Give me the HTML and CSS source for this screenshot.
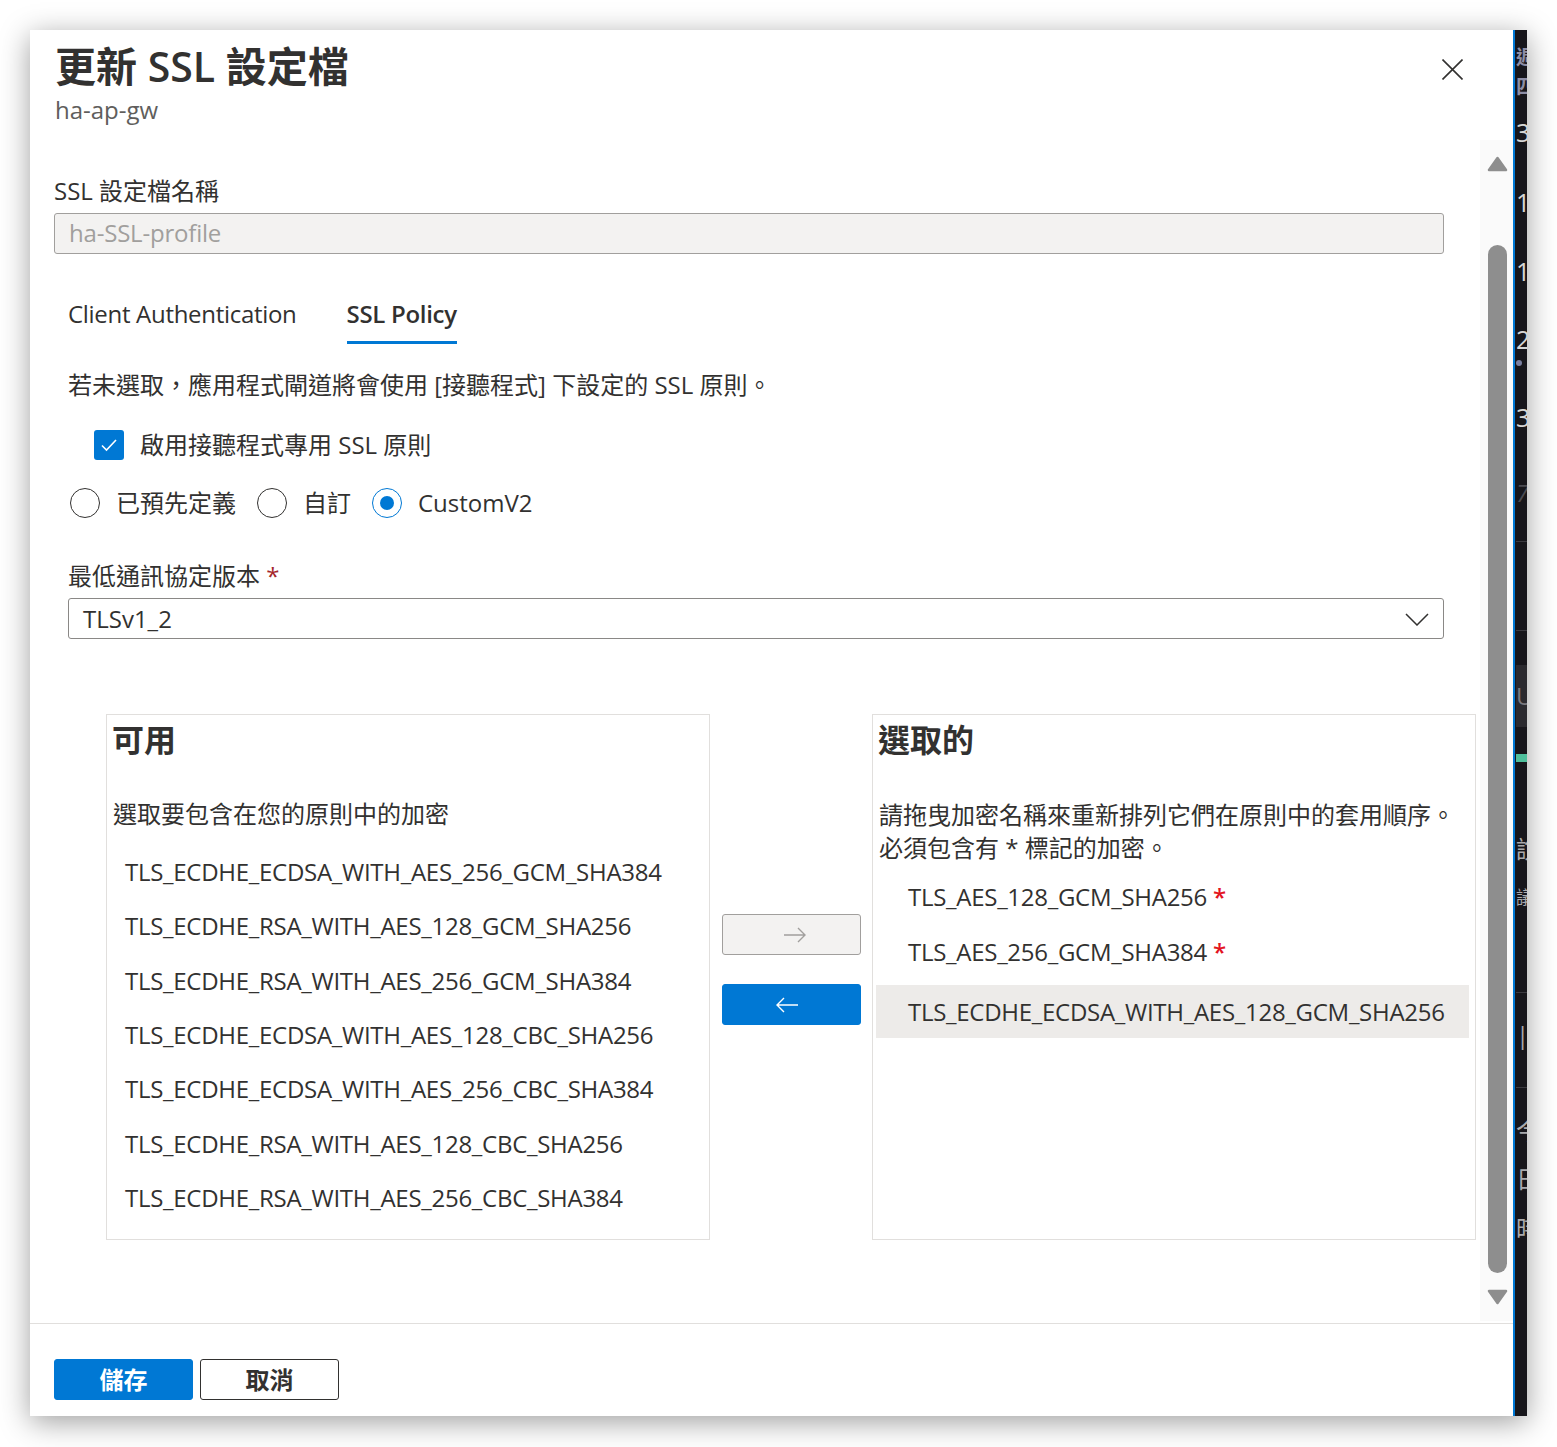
FILE: index.html
```html
<!DOCTYPE html>
<html lang="zh-Hant">
<head>
<meta charset="utf-8">
<title>更新 SSL 設定檔</title>
<link rel="stylesheet" href="styles.css">
</head>
<body>
<div class="window">
  <div class="dialog">
    <header class="header">
      <div class="titles">
        <h1 class="title">更新 SSL 設定檔</h1>
        <div class="subtitle">ha-ap-gw</div>
      </div>
      <button class="close" aria-label="關閉">
        <svg width="21" height="21" viewBox="0 0 21 21"><path d="M0.5 0.5 L20.5 20.5 M20.5 0.5 L0.5 20.5" stroke="#323130" stroke-width="1.6" fill="none"/></svg>
      </button>
    </header>

    <div class="body">
      <div class="content">
        <div class="field-label first">SSL 設定檔名稱</div>
        <div class="input readonly">ha-SSL-profile</div>

        <div class="panel">
          <div class="tabs">
            <span class="tab">Client Authentication</span>
            <span class="tab active">SSL Policy</span>
          </div>

          <p class="info">若未選取，應用程式閘道將會使用 [接聽程式] 下設定的 SSL 原則。</p>

          <div class="check-row">
            <span class="checkbox">
              <svg width="30" height="30" viewBox="0 0 30 30"><polyline points="8,15.5 12.5,20 22,10" stroke="#fff" stroke-width="1.6" fill="none"/></svg>
            </span>
            <span class="check-label">啟用接聽程式專用 SSL 原則</span>
          </div>

          <div class="radio-row">
            <span class="radio"><span class="circle"></span><span class="radio-label">已預先定義</span></span>
            <span class="radio"><span class="circle"></span><span class="radio-label">自訂</span></span>
            <span class="radio"><span class="circle on"><span class="dot"></span></span><span class="radio-label">CustomV2</span></span>
          </div>

          <div class="field-label req">最低通訊協定版本 <span class="star">*</span></div>
          <div class="dropdown">
            <span class="dropdown-text">TLSv1_2</span>
            <svg width="24" height="13" viewBox="0 0 24 13"><polyline points="1,1 12,12 23,1" stroke="#323130" stroke-width="1.5" fill="none"/></svg>
          </div>

          <div class="ciphers">
            <div class="box">
              <div class="box-title">可用</div>
              <div class="box-desc">選取要包含在您的原則中的加密</div>
              <ul class="avail-list">
                <li>TLS_ECDHE_ECDSA_WITH_AES_256_GCM_SHA384</li>
                <li>TLS_ECDHE_RSA_WITH_AES_128_GCM_SHA256</li>
                <li>TLS_ECDHE_RSA_WITH_AES_256_GCM_SHA384</li>
                <li>TLS_ECDHE_ECDSA_WITH_AES_128_CBC_SHA256</li>
                <li>TLS_ECDHE_ECDSA_WITH_AES_256_CBC_SHA384</li>
                <li>TLS_ECDHE_RSA_WITH_AES_128_CBC_SHA256</li>
                <li>TLS_ECDHE_RSA_WITH_AES_256_CBC_SHA384</li>
              </ul>
            </div>

            <div class="mover">
              <button class="move-btn disabled" aria-label="新增">
                <svg width="24" height="16" viewBox="0 0 24 16"><path d="M1 8 H22 M15 1 L22 8 L15 15" stroke="#a19f9d" stroke-width="1.4" fill="none"/></svg>
              </button>
              <button class="move-btn primary" aria-label="移除">
                <svg width="24" height="16" viewBox="0 0 24 16"><path d="M23 8 H2 M9 1 L2 8 L9 15" stroke="#ffffff" stroke-width="1.4" fill="none"/></svg>
              </button>
            </div>

            <div class="box">
              <div class="box-title">選取的</div>
              <div class="box-desc two">請拖曳加密名稱來重新排列它們在原則中的套用順序。<br>必須包含有 * 標記的加密。</div>
              <ul class="sel-list">
                <li>TLS_AES_128_GCM_SHA256 <span class="req-star">*</span></li>
                <li>TLS_AES_256_GCM_SHA384 <span class="req-star">*</span></li>
                <li class="hl">TLS_ECDHE_ECDSA_WITH_AES_128_GCM_SHA256</li>
              </ul>
            </div>
          </div>
        </div>
      </div>

      <div class="scrollbar">
        <svg class="sb-up" width="21" height="16" viewBox="0 0 21 16"><polygon points="10.5,2 19,14 2,14" fill="#8e8e8e" stroke="#8e8e8e" stroke-width="2.5" stroke-linejoin="round"/></svg>
        <span class="thumb"></span>
        <svg class="sb-down" width="21" height="16" viewBox="0 0 21 16"><polygon points="2,2 19,2 10.5,14" fill="#8e8e8e" stroke="#8e8e8e" stroke-width="2.5" stroke-linejoin="round"/></svg>
      </div>
    </div>

    <footer class="footer">
      <button class="btn primary">儲存</button>
      <button class="btn secondary">取消</button>
    </footer>
  </div>

  <div class="strip">
    <div class="s-txt s-week s1">週</div>
    <div class="s-txt s-week s2">四</div>
    <div class="s-txt s-num s3">3</div>
    <div class="s-txt s-num s4">16</div>
    <div class="s-txt s-num s5">17</div>
    <div class="s-txt s-num s6">24</div>
    <div class="s-dot"></div>
    <div class="s-txt s-num s7">3</div>
    <div class="s-txt s-dim s8">7</div>
    <div class="s-line l1"></div>
    <div class="s-line l2"></div>
    <div class="s-block"><span>U</span></div>
    <div class="s-teal"></div>
    <div class="s-txt s-cjk s9">說</div>
    <div class="s-txt s-cjk s10">議</div>
    <div class="s-line l3"></div>
    <div class="s-txt s-cjk s11">|林</div>
    <div class="s-line l4"></div>
    <div class="s-txt s-cjk s12">今</div>
    <div class="s-txt s-cjk s13">日</div>
    <div class="s-txt s-cjk s14">時</div>
  </div>
</div>
</body>
</html>
```

FILE: styles.css
```css
* { box-sizing: border-box; }

html, body {
  margin: 0;
  padding: 0;
}

body {
  width: 1557px;
  height: 1447px;
  overflow: hidden;
  background: #ffffff;
  font-family: "Open Sans", "Noto Sans CJK TC", sans-serif;
  color: #323130;
  font-size: 24px;
}

button {
  font-family: inherit;
  cursor: pointer;
}

.window {
  margin: 30px 0 0 30px;
  width: 1497px;
  height: 1386px;
  display: flex;
  box-shadow: 0 6px 28px rgba(0, 0, 0, 0.38);
}

.dialog {
  width: 1483px;
  height: 1386px;
  background: #ffffff;
  display: flex;
  flex-direction: column;
  flex: none;
}

/* Header */
.header {
  height: 110px;
  flex: none;
  display: flex;
  justify-content: space-between;
  align-items: flex-start;
  padding: 12px 50px 0 25px;
}

.title {
  margin: 0;
  font-size: 41px;
  font-weight: 600;
  line-height: 48px;
  color: #323130;
}

.subtitle {
  margin-top: 4px;
  font-size: 24px;
  line-height: 32px;
  color: #605e5c;
}

.close {
  margin-top: 17px;
  width: 21px;
  height: 21px;
  padding: 0;
  border: 0;
  background: none;
  display: block;
}

.close svg { display: block; }

/* Body */
.body {
  height: 1183px;
  flex: none;
  display: flex;
  overflow: hidden;
}

.content {
  flex: 1;
  min-width: 0;
  padding-left: 24px;
}

.field-label {
  font-size: 24px;
  line-height: 32px;
  color: #323130;
}

.field-label.first { margin-top: 35px; }

.input {
  margin-top: 6px;
  width: 1390px;
  height: 41px;
  border: 1px solid #a19f9d;
  border-radius: 3px;
  padding-left: 14px;
  font-size: 24px;
  line-height: 38px;
  letter-spacing: -0.2px;
}

.input.readonly {
  background: #f3f2f1;
  color: #a19f9d;
}

.panel {
  margin-top: 44px;
  padding-left: 14px;
}

.tabs {
  display: flex;
  gap: 50px;
}

.tab {
  font-size: 24px;
  line-height: 32px;
  padding-bottom: 11px;
  border-bottom: 3px solid transparent;
  color: #323130;
  letter-spacing: -0.3px;
}

.tab.active {
  font-weight: 600;
  border-bottom-color: #0078d4;
}

.info {
  margin: 25px 0 0 0;
  font-size: 24px;
  line-height: 32px;
}

.check-row {
  margin-top: 28px;
  height: 32px;
  display: flex;
  align-items: center;
  padding-left: 26px;
  gap: 16px;
}

.checkbox {
  width: 30px;
  height: 30px;
  border-radius: 3px;
  background: #0078d4;
  display: block;
}

.checkbox svg { display: block; }

.check-label { line-height: 32px; }

.radio-row {
  margin-top: 26px;
  height: 32px;
  display: flex;
  align-items: center;
  padding-left: 2px;
  gap: 21px;
}

.radio {
  display: flex;
  align-items: center;
  gap: 16px;
}

.circle {
  width: 30px;
  height: 30px;
  border-radius: 50%;
  border: 1px solid #323130;
  display: flex;
  align-items: center;
  justify-content: center;
}

.circle.on { border-color: #0078d4; }

.dot {
  width: 14px;
  height: 14px;
  border-radius: 50%;
  background: #0078d4;
}

.radio-label { line-height: 32px; }

.field-label.req { margin-top: 41px; }

.star {
  color: #a4262c;
}

.dropdown {
  margin-top: 6px;
  width: 1376px;
  height: 41px;
  border: 1px solid #8a8886;
  border-radius: 3px;
  display: flex;
  align-items: center;
  justify-content: space-between;
  padding: 0 14px 0 14px;
}

.dropdown-text { line-height: 38px; }

.dropdown svg { display: block; margin-top: 2px; }

/* Cipher lists */
.ciphers {
  margin-top: 75px;
  margin-left: 38px;
  display: flex;
  height: 526px;
}

.box {
  width: 604px;
  height: 526px;
  border: 1px solid #e1dfdd;
  padding: 5px 6px 0 5px;
  flex: none;
}

.box-title {
  font-size: 32px;
  font-weight: 700;
  line-height: 40px;
}

.box-desc {
  margin-top: 38px;
  font-size: 24px;
  line-height: 32px;
  padding-left: 1px;
}

.box-desc.two { line-height: 33px; }

.avail-list {
  list-style: none;
  margin: 15px 0 0 0;
  padding: 0 0 0 13px;
}

.avail-list li {
  height: 54.33px;
  line-height: 54.33px;
  white-space: nowrap;
  letter-spacing: -0.28px;
}

.sel-list {
  list-style: none;
  margin: 6px 0 0 -2px;
  padding: 0;
}

.sel-list li {
  height: 53px;
  line-height: 53px;
  padding-left: 32px;
  white-space: nowrap;
  letter-spacing: -0.28px;
}

.sel-list li + li { margin-top: 2px; }

.sel-list li.hl {
  margin-top: 7px;
  background: #edebe9;
}

.req-star {
  color: #e3141f;
  font-weight: 600;
}

.mover {
  width: 162px;
  flex: none;
  display: flex;
  flex-direction: column;
  align-items: center;
  justify-content: center;
  gap: 29px;
  padding-bottom: 15px;
}

.move-btn {
  width: 139px;
  height: 41px;
  border-radius: 3px;
  padding: 0;
  display: flex;
  align-items: center;
  justify-content: center;
}

.move-btn svg { display: block; }

.move-btn.disabled {
  background: #f3f2f1;
  border: 1px solid #a19f9d;
}

.move-btn.disabled svg { margin-left: 8px; }

.move-btn.primary {
  background: #0078d4;
  border: 1px solid #0078d4;
}

.move-btn.primary svg { margin-right: 8px; }

/* Scrollbar */
.scrollbar {
  width: 33px;
  flex: none;
  height: 1181px;
  background: #fafafa;
  display: flex;
  flex-direction: column;
  align-items: center;
  padding-left: 2px;
}

.sb-up { display: block; margin-top: 16px; }

.thumb {
  display: block;
  margin-top: 73px;
  width: 19px;
  height: 1028px;
  border-radius: 10px;
  background: #8e8e8e;
}

.sb-down { display: block; margin-top: 16px; }

/* Footer */
.footer {
  flex: 1;
  border-top: 1px solid #e1dfdd;
  padding: 35px 0 0 24px;
  display: flex;
  align-items: flex-start;
  gap: 7px;
}

.btn {
  width: 139px;
  height: 41px;
  border-radius: 3px;
  font-size: 24px;
  font-weight: 700;
  line-height: 39px;
  padding: 0;
  text-align: center;
}

.btn.primary {
  background: #0078d4;
  border: 1px solid #0078d4;
  color: #ffffff;
}

.btn.secondary {
  background: #ffffff;
  border: 1px solid #323130;
  color: #323130;
}

/* Background window strip */
.strip {
  width: 14px;
  height: 1386px;
  flex: none;
  background: #17161b;
  border-left: 2px solid #0078d4;
  overflow: hidden;
  display: flex;
  flex-direction: column;
  padding-left: 1px;
}

.s-txt {
  white-space: nowrap;
  flex: none;
}

.s-week {
  font-size: 20px;
  line-height: 22px;
  font-weight: 700;
  color: #8d8ea6;
}

.s-num {
  font-size: 25px;
  line-height: 26px;
  color: #d6d6d6;
}

.s-dim {
  font-size: 24px;
  line-height: 26px;
  color: #4b4b52;
  font-style: italic;
}

.s-cjk {
  font-size: 24px;
  line-height: 26px;
  color: #a9a9ad;
}

.s1 { margin-top: 17px; }
.s2 { margin-top: 7px; }
.s3 { margin-top: 21px; }
.s4 { margin-top: 44px; }
.s5 { margin-top: 43px; }
.s6 { margin-top: 42px; }

.s-dot {
  flex: none;
  margin-top: 8px;
  width: 6px;
  height: 6px;
  border-radius: 50%;
  background: #7a7fa0;
}

.s7 { margin-top: 38px; }
.s8 { margin-top: 50px; }

.s-line {
  flex: none;
  height: 1px;
  background: #3b3a40;
}

.l1 { margin-top: 35px; }
.l2 { margin-top: 88px; }

.s-block {
  flex: none;
  margin-top: 34px;
  height: 62px;
  background: #2b2a2f;
  color: #7a7a80;
  font-size: 24px;
  line-height: 62px;
}

.s-teal {
  flex: none;
  margin-top: 27px;
  height: 8px;
  background: #4fbf9c;
}

.s9 { margin-top: 74px; }
.s10 { margin-top: 22px; font-size: 18px; }
.l3 { margin-top: 82px; }
.s11 { margin-top: 29px; }
.l4 { margin-top: 39px; }
.s12 { margin-top: 30px; }
.s13 { margin-top: 22px; }
.s14 { margin-top: 24px; }
```
